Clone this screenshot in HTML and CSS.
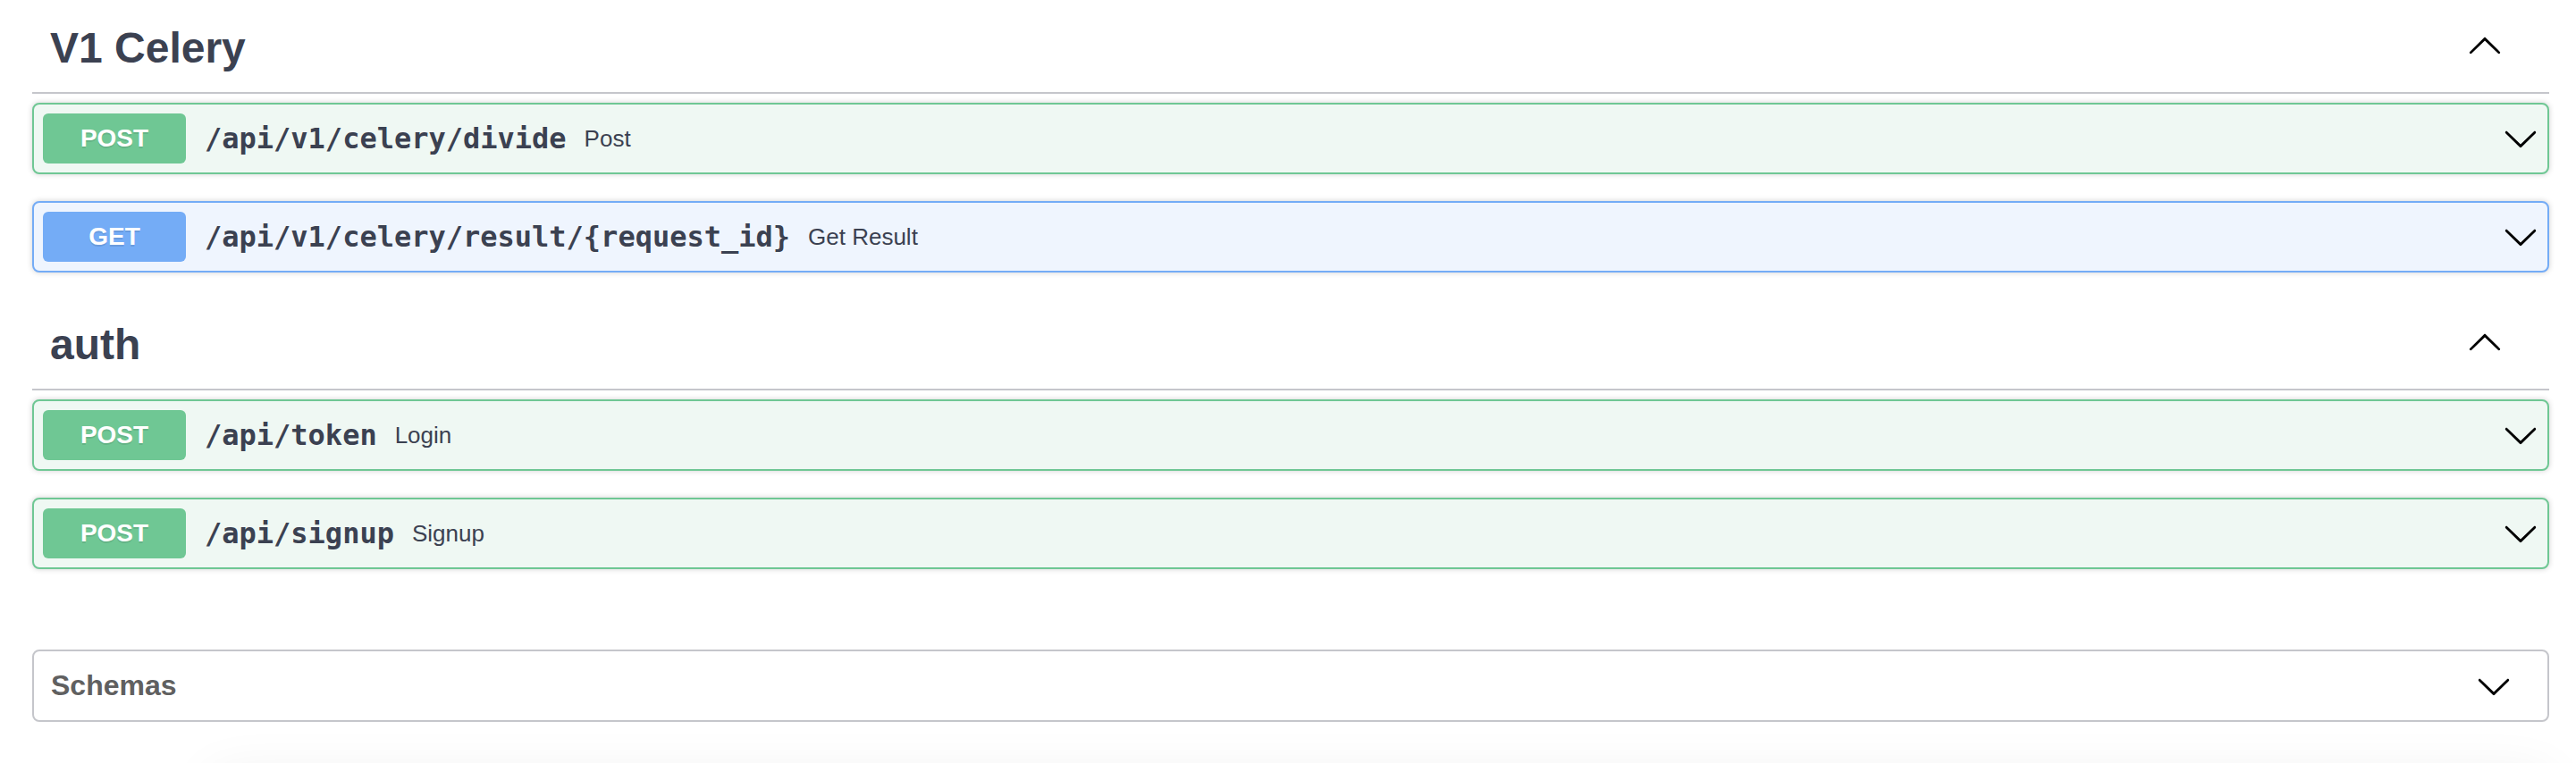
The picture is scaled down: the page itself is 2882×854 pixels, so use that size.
FILE: index.html
```html
<!DOCTYPE html>
<html lang="en">
<head>
<meta charset="utf-8">
<title>API docs</title>
<link rel="stylesheet" href="styles.css">
</head>
<body>
<div class="wrapper">
  <section class="tag-section">
    <h3 class="opblock-tag">
      <span class="tag-name">V1 Celery</span>
      <svg class="tag-arrow" viewBox="0 0 20 20" aria-hidden="true"><path d="M17.418 14.908c.272.268.709.268.979 0s.27-.701 0-.969l-7.908-7.83c-.27-.268-.707-.268-.979 0l-7.908 7.83c-.27.268-.27.701 0 .969.271.268.709.268.979 0L10 7.767l7.418 7.141z"/></svg>
    </h3>
    <div class="opblock opblock-post">
      <div class="opblock-summary">
        <span class="method method-post">POST</span>
        <span class="path">/api/v1/celery/divide</span>
        <span class="desc">Post</span>
        <svg class="arrow" viewBox="0 0 20 20" aria-hidden="true"><path d="M17.418 6.109c.272-.268.709-.268.979 0s.27.701 0 .969l-7.908 7.83c-.27.268-.707.268-.979 0l-7.908-7.830c-.27-.268-.27-.701 0-.969.271-.268.709-.268.979 0L10 13.25l7.418-7.141z"/></svg>
      </div>
    </div>
    <div class="opblock opblock-get">
      <div class="opblock-summary">
        <span class="method method-get">GET</span>
        <span class="path">/api/v1/celery/result/{request_id}</span>
        <span class="desc">Get Result</span>
        <svg class="arrow" viewBox="0 0 20 20" aria-hidden="true"><path d="M17.418 6.109c.272-.268.709-.268.979 0s.27.701 0 .969l-7.908 7.83c-.27.268-.707.268-.979 0l-7.908-7.83c-.27-.268-.27-.701 0-.969.271-.268.709-.268.979 0L10 13.25l7.418-7.141z"/></svg>
      </div>
    </div>
  </section>

  <section class="tag-section">
    <h3 class="opblock-tag">
      <span class="tag-name">auth</span>
      <svg class="tag-arrow" viewBox="0 0 20 20" aria-hidden="true"><path d="M17.418 14.908c.272.268.709.268.979 0s.27-.701 0-.969l-7.908-7.83c-.27-.268-.707-.268-.979 0l-7.908 7.83c-.27.268-.27.701 0 .969.271.268.709.268.979 0L10 7.767l7.418 7.141z"/></svg>
    </h3>
    <div class="opblock opblock-post">
      <div class="opblock-summary">
        <span class="method method-post">POST</span>
        <span class="path">/api/token</span>
        <span class="desc">Login</span>
        <svg class="arrow" viewBox="0 0 20 20" aria-hidden="true"><path d="M17.418 6.109c.272-.268.709-.268.979 0s.27.701 0 .969l-7.908 7.83c-.27.268-.707.268-.979 0l-7.908-7.83c-.27-.268-.27-.701 0-.969.271-.268.709-.268.979 0L10 13.25l7.418-7.141z"/></svg>
      </div>
    </div>
    <div class="opblock opblock-post">
      <div class="opblock-summary">
        <span class="method method-post">POST</span>
        <span class="path">/api/signup</span>
        <span class="desc">Signup</span>
        <svg class="arrow" viewBox="0 0 20 20" aria-hidden="true"><path d="M17.418 6.109c.272-.268.709-.268.979 0s.27.701 0 .969l-7.908 7.83c-.27.268-.707.268-.979 0l-7.908-7.83c-.27-.268-.27-.701 0-.969.271-.268.709-.268.979 0L10 13.25l7.418-7.141z"/></svg>
      </div>
    </div>
  </section>

  <section class="models">
    <h4 class="models-title">
      <span class="models-name">Schemas</span>
      <svg class="models-arrow" viewBox="0 0 20 20" aria-hidden="true"><path d="M17.418 6.109c.272-.268.709-.268.979 0s.27.701 0 .969l-7.908 7.83c-.27.268-.707.268-.979 0l-7.908-7.83c-.27-.268-.27-.701 0-.969.271-.268.709-.268.979 0L10 13.25l7.418-7.141z"/></svg>
    </h4>
  </section>

  <div class="below-panel"></div>
</div>
</body>
</html>
```

FILE: styles.css
```css
* {
  box-sizing: border-box;
}

html,
body {
  margin: 0;
  background: #ffffff;
  overflow: hidden;
}

body {
  font-family: "Liberation Sans", Arial, Helvetica, sans-serif;
  color: #3b4151;
}

.wrapper {
  padding: 3px 30px 0 36px;
}

.tag-section {
  display: flex;
  flex-direction: column;
}

.opblock-tag {
  display: flex;
  align-items: center;
  margin: 0 0 10px;
  padding: 23px 0 22px 20px;
  border-bottom: 2px solid #c5c6cb;
  font-size: 48px;
  font-weight: 700;
  line-height: normal;
  color: #3b4151;
}

.tag-name {
  flex: 1;
}

.tag-arrow {
  width: 40px;
  height: 40px;
  margin: 0 52px 8px 0;
  fill: #000000;
  flex-shrink: 0;
}

.opblock {
  margin: 0 0 30px;
  border: 2px solid;
  border-radius: 8px;
  box-shadow: 0 0 6px rgba(0, 0, 0, 0.19);
}

.opblock-post {
  background: #eff8f3;
  border-color: #6fc794;
}

.opblock-get {
  background: #eff5fe;
  border-color: #74acf6;
}

.opblock-summary {
  display: flex;
  align-items: center;
  padding: 10px;
}

.method {
  min-width: 160px;
  padding: 12px 0;
  border-radius: 6px;
  font-size: 28px;
  font-weight: 700;
  line-height: normal;
  color: #ffffff;
  text-align: center;
  text-shadow: 0 2px 0 rgba(0, 0, 0, 0.1);
}

.method-post {
  background: #6fc794;
}

.method-get {
  background: #74acf6;
}

.path {
  padding: 0 20px 0 21px;
  font-family: "DejaVu Sans Mono", "Liberation Mono", monospace;
  font-size: 32px;
  font-weight: 700;
  color: #3b4151;
}

.desc {
  flex: 1;
  font-size: 26px;
  color: #3b4151;
}

.arrow {
  width: 40px;
  height: 40px;
  fill: #000000;
  flex-shrink: 0;
}

.models {
  margin: 60px 0 0;
  border: 2px solid #c5c6cb;
  border-radius: 8px;
}

.models-title {
  display: flex;
  align-items: center;
  margin: 0;
  padding: 20px 40px 20px 19px;
  font-size: 32px;
  font-weight: 700;
  line-height: normal;
  color: #606060;
}

.models-name {
  flex: 1;
}

.models-arrow {
  width: 40px;
  height: 40px;
  margin: -2px 0;
  fill: #000000;
  flex-shrink: 0;
}

.below-panel {
  margin: 60px 0 0 200px;
  height: 300px;
  background: #ffffff;
  border-radius: 8px;
  box-shadow: 0 0 60px rgba(0, 0, 0, 0.07);
}
```
